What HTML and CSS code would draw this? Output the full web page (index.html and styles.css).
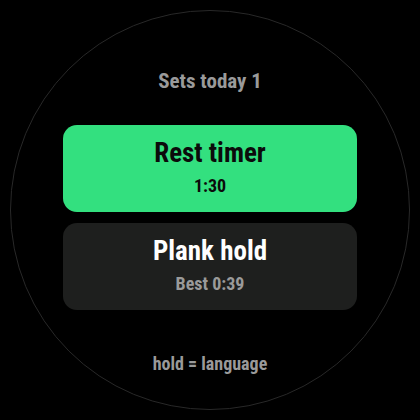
FILE: index.html
```html
<!DOCTYPE html>
<html lang="en">
<head>
    <meta charset="UTF-8">
    <meta name="viewport" content="width=device-width, initial-scale=1.0">
    <title>Workout</title>
    <link rel="stylesheet" href="styles.css">
</head>
<body>
    <div class="watch">
        <div class="sets">Sets today 1</div>

        <div class="card card-primary">
            <div class="card-title">Rest timer</div>
            <div class="card-sub">1:30</div>
        </div>

        <div class="card card-dark">
            <div class="card-title">Plank hold</div>
            <div class="card-sub">Best 0:39</div>
        </div>

        <div class="hint">hold = language</div>
    </div>
</body>
</html>
```

FILE: styles.css
```css
html, body {
    margin: 0;
    padding: 0;
    background: #000;
}
body {
    width: 420px;
    height: 420px;
    font-family: 'Roboto', 'Liberation Sans', sans-serif;
    font-stretch: 75%;
    font-weight: 700;
}
.watch {
    box-sizing: border-box;
    width: 400px;
    height: 400px;
    margin: 10px;
    border: 1px solid #282828;
    border-radius: 50%;
    display: flex;
    flex-direction: column;
    align-items: center;
    padding-top: 58px;
}
.sets {
    color: #9a9a9a;
    font-size: 21px;
    line-height: 24px;
    margin-bottom: 32px;
}
.card {
    box-sizing: border-box;
    width: 294px;
    height: 87px;
    border-radius: 14px;
    display: flex;
    flex-direction: column;
    align-items: center;
    padding-top: 12px;
}
.card-primary {
    background: #33e07f;
    color: #0b0b0b;
    margin-bottom: 11px;
}
.card-dark {
    background: #1e1f1e;
    color: #fff;
}
.card-title {
    font-size: 27px;
    line-height: 32px;
}
.card-sub {
    font-size: 18px;
    line-height: 22px;
    margin-top: 6px;
}
.card-dark .card-sub {
    color: #9a9a9a;
}
.hint {
    color: #9a9a9a;
    font-size: 18px;
    line-height: 22px;
    margin-top: 43px;
}
```
